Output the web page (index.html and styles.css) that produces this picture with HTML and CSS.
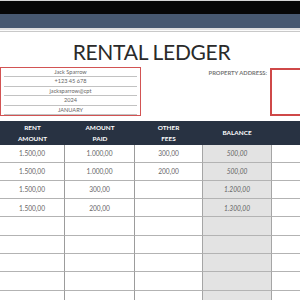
FILE: index.html
```html
<!DOCTYPE html>
<html>
<head>
<meta charset="utf-8">
<link rel="stylesheet" href="styles.css">
</head>
<body>
<div class="page">
  <div class="chrome"></div>
  <div class="ribbon"></div>
  <div class="rule"></div>
  <h1 class="title">RENTAL LEDGER</h1>
  <div class="info">
    <div class="tenant">
      <div class="trow">Jack Sparrow</div>
      <div class="trow">+123 45 678</div>
      <div class="trow">jacksparrow@cpt</div>
      <div class="trow">2024</div>
      <div class="trow">JANUARY</div>
    </div>
    <div class="label">PROPERTY ADDRESS:</div>
    <div class="addr-box"></div>
  </div>
  <div class="ledger">
    <div class="hcell">RENT<br>AMOUNT</div>
    <div class="hcell">AMOUNT<br>PAID</div>
    <div class="hcell">OTHER<br>FEES</div>
    <div class="hcell">BALANCE</div>
    <div class="hcell"></div>

    <div class="cell c1">1.500,00</div><div class="cell c2">1.000,00</div><div class="cell c3">300,00</div><div class="cell bal">500,00</div><div class="cell c5"></div>
    <div class="cell c1">1.500,00</div><div class="cell c2">1.000,00</div><div class="cell c3">200,00</div><div class="cell bal">500,00</div><div class="cell c5"></div>
    <div class="cell c1">1.500,00</div><div class="cell c2">300,00</div><div class="cell c3"></div><div class="cell bal">1.200,00</div><div class="cell c5"></div>
    <div class="cell c1">1.500,00</div><div class="cell c2">200,00</div><div class="cell c3"></div><div class="cell bal">1.300,00</div><div class="cell c5"></div>
    <div class="cell c1"></div><div class="cell c2"></div><div class="cell c3"></div><div class="cell bal"></div><div class="cell c5"></div>
    <div class="cell c1"></div><div class="cell c2"></div><div class="cell c3"></div><div class="cell bal"></div><div class="cell c5"></div>
    <div class="cell c1"></div><div class="cell c2"></div><div class="cell c3"></div><div class="cell bal"></div><div class="cell c5"></div>
    <div class="cell c1"></div><div class="cell c2"></div><div class="cell c3"></div><div class="cell bal"></div><div class="cell c5"></div>
    <div class="cell c1"></div><div class="cell c2"></div><div class="cell c3"></div><div class="cell bal"></div><div class="cell c5"></div>
  </div>
</div>
</body>
</html>
```

FILE: styles.css
```css
* { box-sizing: border-box; }
html, body { margin: 0; padding: 0; background: #fff; }
body { font-family: Lato, "Open Sans", "Liberation Sans", sans-serif; }
.page { width: 300px; height: 300px; overflow: hidden; }

.chrome { height: 14px; background: #060606; border-top: 1px solid #d4d4d4; }
.ribbon { height: 14px; background: #475870; }
.rule { height: 4px; border-top: 2px solid #dedede; border-bottom: 1px solid #c9c9c9; background: #fbfbfb; }

.title {
  margin: 0;
  padding: 7px 0 0 3px;
  height: 35px;
  line-height: 25px;
  font-size: 21px;
  font-weight: 400;
  letter-spacing: -0.3px;
  text-align: center;
  color: #2a2a2a;
}

.info { display: flex; height: 49px; }
.tenant {
  flex: 0 0 141px;
  border: 1px solid #d25353;
  padding: 0 3px;
}
.trow {
  height: 9.4px;
  line-height: 8.4px;
  border-bottom: 1px solid #c2c2c2;
  font-size: 5.6px;
  color: #666;
  text-align: center;
}
.label {
  flex: 1;
  text-align: right;
  padding: 1px 3px 0 0;
  font-size: 5.8px;
  line-height: 9px;
  font-weight: 700;
  color: #777;
}
.addr-box {
  flex: 0 0 30px;
  margin-top: 1px;
  border: 2px solid #cf4848;
  border-right: none;
}

.ledger {
  margin-top: 4.5px;
  display: grid;
  grid-template-columns: 65px 70px 67px 70px 28px;
  grid-template-rows: 24.5px 17.5px repeat(8, 18.3px);
}
.hcell {
  background: #283242;
  color: #fff;
  font-weight: 700;
  font-size: 6.4px;
  line-height: 11px;
  display: flex;
  align-items: center;
  justify-content: center;
  text-align: center;
}
.cell {
  border-bottom: 1px solid #b3b3b3;
  font-size: 6.6px;
  color: #666;
  display: flex;
  align-items: center;
  justify-content: center;
}
.c1, .c2 { border-right: 1px solid #9c9c9c; }
.bal {
  background: #e3e3e3;
  border-left: 1px solid #a5a5a5;
  border-right: 1px solid #a5a5a5;
  font-style: italic;
}
```
